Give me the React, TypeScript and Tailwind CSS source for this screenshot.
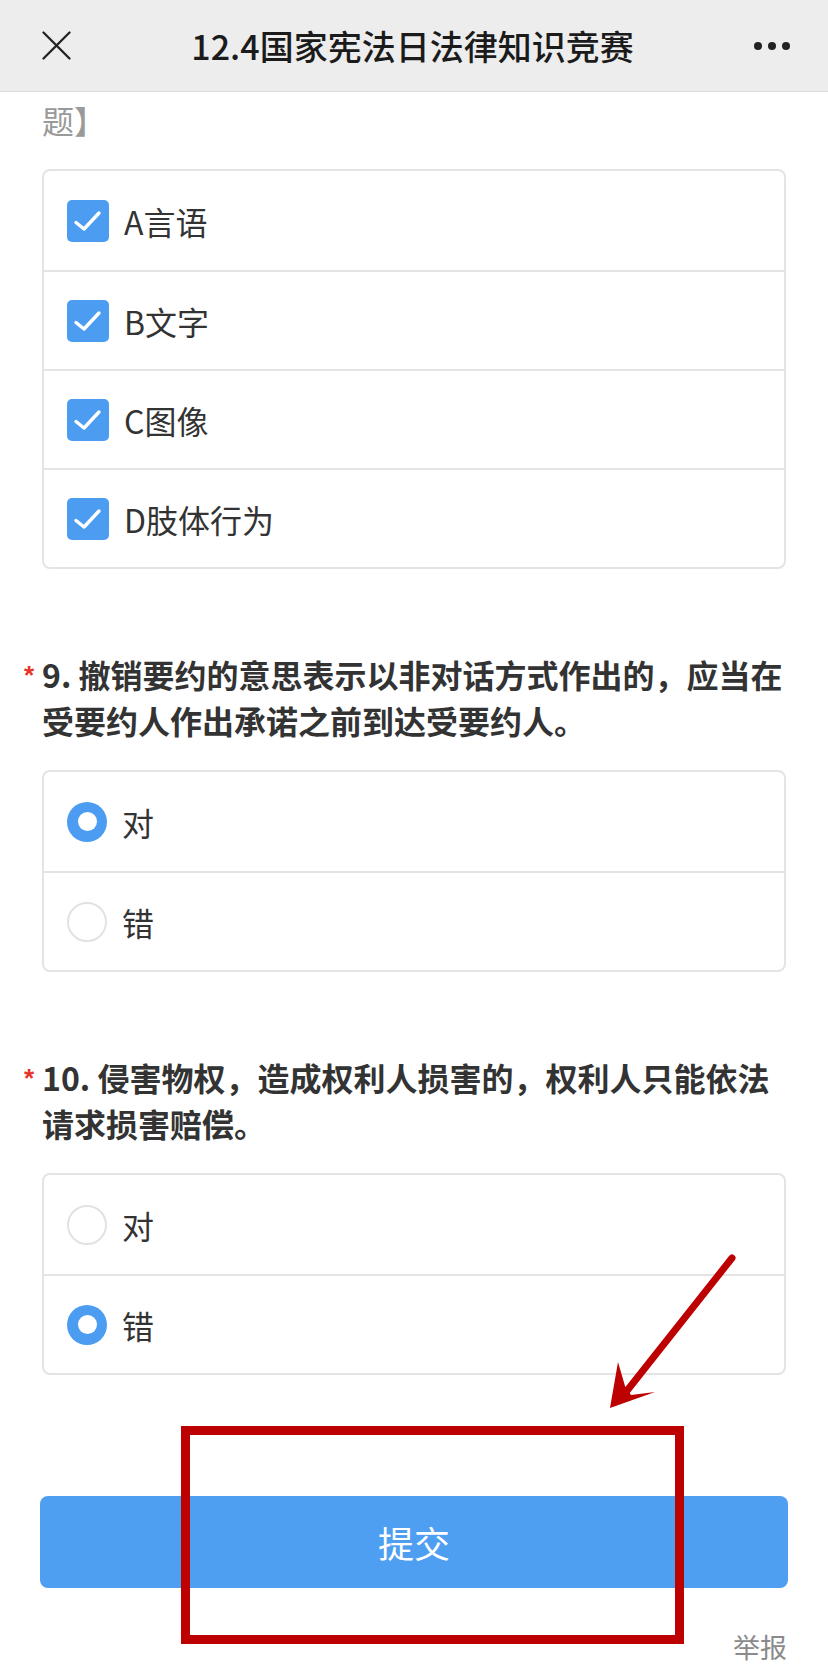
import React from 'react';

type Option = { label: string; checked: boolean };

const multiOptions: Option[] = [
    { label: 'A言语', checked: true },
    { label: 'B文字', checked: true },
    { label: 'C图像', checked: true },
    { label: 'D肢体行为', checked: true },
];

function CheckBox() {
    return (
        <span className="flex h-[42px] w-[42px] shrink-0 items-center justify-center rounded-[5px] bg-[#4c9df2]">
            <svg width="42" height="42" viewBox="0 0 42 42" fill="none">
                <path d="M9 22.5l8 6.5L32 13" stroke="#fff" strokeWidth="3.4" strokeLinecap="round" strokeLinejoin="round" />
            </svg>
        </span>
    );
}

function Radio({ checked }: { checked: boolean }) {
    if (checked) {
        return (
            <span className="flex h-[40px] w-[40px] shrink-0 items-center justify-center rounded-full bg-[#4c9df2]">
                <span className="h-[19px] w-[19px] rounded-full bg-white" />
            </span>
        );
    }
    return <span className="h-[40px] w-[40px] shrink-0 rounded-full border-2 border-[#e2e2e2] bg-white" />;
}

function OptionCard({ options, type }: { options: Option[]; type: 'check' | 'radio' }) {
    return (
        <div className="overflow-hidden rounded-[8px] border-2 border-[#e4e4e4] bg-white">
            {options.map((o, i) => (
                <div
                    key={o.label}
                    className={`flex h-[99px] items-center gap-[15px] pl-[23px] ${i > 0 ? 'border-t-2 border-[#e4e4e4]' : ''}`}
                >
                    {type === 'check' ? <CheckBox /> : <Radio checked={o.checked} />}
                    <span className="text-[32px] leading-[40px] text-[#333]">{o.label}</span>
                </div>
            ))}
        </div>
    );
}

function Question({ lines }: { lines: string[] }) {
    return (
        <div className="-ml-[18px] flex">
            <span className="w-[18px] shrink-0 pt-[1px] font-['Liberation_Sans',sans-serif] text-[26px] font-bold leading-[46px] text-[#e5352b]">
                *
            </span>
            <p className="text-[32px] font-bold leading-[46px] text-[#333]">
                {lines.map((l, i) => (
                    <span key={i} className="block whitespace-nowrap">{l}</span>
                ))}
            </p>
        </div>
    );
}

export default function App() {
    return (
        <div className="relative h-[1665px] w-[828px] overflow-hidden bg-white font-['Noto_Sans_CJK_SC',sans-serif]">
            {/* Top bar */}
            <header className="flex h-[92px] items-center justify-between border-b border-[#dadada] bg-[#ededed] pl-[42px] pr-[38px]">
                <svg width="29" height="29" viewBox="0 0 29 29" fill="none">
                    <path d="M1.5 1.5l26 26M27.5 1.5l-26 26" stroke="#222" strokeWidth="2.3" strokeLinecap="round" />
                </svg>
                <h1 className="text-[34px] font-medium leading-[44px] text-[#1b1b1b]">12.4国家宪法日法律知识竞赛</h1>
                <div className="flex items-center gap-[6px]">
                    <span className="h-[8px] w-[8px] rounded-full bg-[#222]" />
                    <span className="h-[8px] w-[8px] rounded-full bg-[#222]" />
                    <span className="h-[8px] w-[8px] rounded-full bg-[#222]" />
                </div>
            </header>

            <main className="px-[42px] pt-[5px]">
                <p className="text-[32px] leading-[46px] text-[#9a9a9a]">题】</p>

                <div className="mt-[26px]">
                    <OptionCard options={multiOptions} type="check" />
                </div>

                {/* Question 9 */}
                <div className="mt-[82px]">
                    <Question lines={['9. 撤销要约的意思表示以非对话方式作出的，应当在', '受要约人作出承诺之前到达受要约人。']} />
                </div>
                <div className="mt-[27px]">
                    <OptionCard options={[{ label: '对', checked: true }, { label: '错', checked: false }]} type="radio" />
                </div>

                {/* Question 10 */}
                <div className="mt-[82px]">
                    <Question lines={['10. 侵害物权，造成权利人损害的，权利人只能依法', '请求损害赔偿。']} />
                </div>
                <div className="mt-[27px]">
                    <OptionCard options={[{ label: '对', checked: false }, { label: '错', checked: true }]} type="radio" />
                </div>
            </main>

            <div className="mt-[121px] px-[40px]">
                <button className="flex h-[92px] w-full items-center justify-center rounded-[8px] bg-[#4e9ef2] text-[36px] leading-[44px] text-white">
                    提交
                </button>
                <div className="mt-[44px] flex justify-end pr-[1px]">
                    <span className="text-[27px] leading-[30px] text-[#8a8a8a]">举报</span>
                </div>
            </div>

            {/* Annotation overlays */}
            <svg className="absolute left-[600px] top-[1250px]" width="140" height="165" viewBox="0 0 140 165" fill="none">
                <path d="M132 8L26 142" stroke="#bd0000" strokeWidth="7" strokeLinecap="round" />
                <path d="M10 158L18 112L25 136L31 145L55 142Z" fill="#bd0000" />
            </svg>
            <div className="absolute left-[181px] top-[1426px] h-[218px] w-[503px] border-[9px] border-[#bd0000]" />
        </div>
    );
}
